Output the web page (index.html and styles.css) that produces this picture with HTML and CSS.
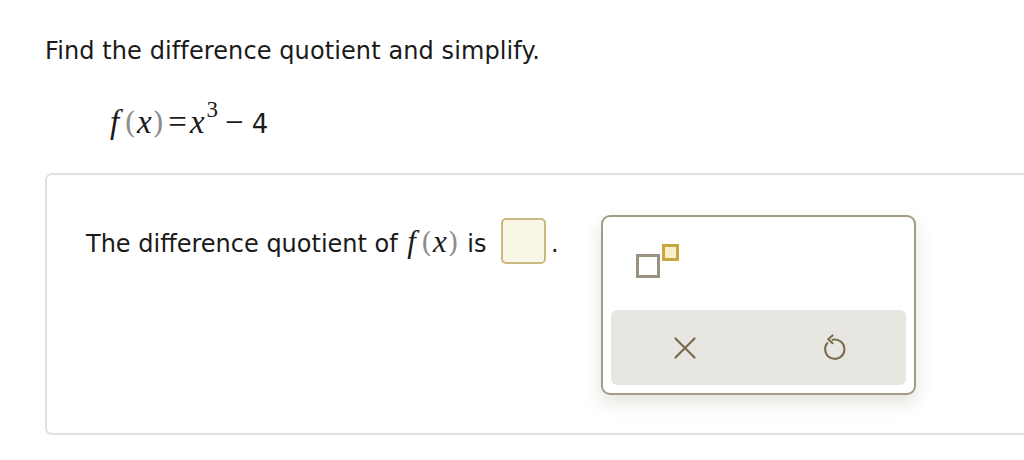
FILE: index.html
```html
<!DOCTYPE html>
<html lang="en">
<head>
    <meta charset="UTF-8">
    <title>Difference Quotient</title>
    <link rel="stylesheet" href="styles.css">
</head>
<body>
    <p class="prompt">Find the difference quotient and simplify.</p>
    <div class="formula">
        <span class="var f">f</span><span class="paren">(</span><span class="var">x</span><span class="paren">)</span><span class="op">=</span><span class="var">x</span><sup>3</sup><span class="op minus">&minus;</span><span class="num">4</span>
    </div>

    <div class="card">
        <div class="sentence-col">
            <p class="sentence">The difference quotient of <span class="var f">f</span><span class="paren">(</span><span class="var">x</span><span class="paren">)</span> is <span class="answer-box"></span><span class="dot">.</span></p>
        </div>

        <div class="keypad">
            <div class="keypad-top">
                <button class="sup-button" title="Superscript">
                    <span class="sq-base"></span><span class="sq-exp"></span>
                </button>
            </div>
            <div class="keypad-actions">
                <button class="icon-button" title="Clear">
                    <svg width="22" height="22" viewBox="0 0 22 22" fill="none" stroke="#7a6b4a" stroke-width="2.2" stroke-linecap="round">
                        <path d="M1.5 1.5 L20.5 20.5 M20.5 1.5 L1.5 20.5"/>
                    </svg>
                </button>
                <button class="icon-button" title="Undo">
                    <svg width="25" height="29" viewBox="0 0 26 30" fill="none" stroke="#7a6b4a" stroke-width="2.2" stroke-linecap="round" stroke-linejoin="round">
                        <path d="M6.5 10.5 A10 10 0 1 0 12 7"/>
                        <path d="M12 2.5 L7.5 6.5 L12 10.5"/>
                    </svg>
                </button>
            </div>
        </div>
    </div>
</body>
</html>
```

FILE: styles.css
```css
body {
    margin: 0;
    padding: 0;
    background: #fff;
    color: #1a1a1a;
    font-family: "DejaVu Sans", "Open Sans", sans-serif;
}

.prompt {
    margin: 0;
    padding: 36px 0 0 45px;
    font-size: 24px;
    line-height: 30px;
    letter-spacing: 0.1px;
}

.formula {
    padding: 36px 0 0 110px;
    height: 40px;
    font-family: "Liberation Serif", serif;
    font-size: 33px;
    line-height: 40px;
    white-space: nowrap;
}

.var {
    font-family: "Liberation Serif", serif;
    font-style: italic;
}

.var.f {
    padding-right: 4px;
}

.paren {
    font-family: "DejaVu Serif", serif;
    font-size: 30px;
    color: #8d8d8d;
    padding: 0 1px;
}

.formula .op {
    padding: 0 3px;
}

.formula .minus {
    padding: 0 8px 0 7px;
}

.formula sup {
    font-size: 23px;
    vertical-align: 16px;
    line-height: 0;
    margin-left: 2px;
}

.formula .num {
    font-family: "DejaVu Sans", sans-serif;
    font-size: 26px;
}

.card {
    margin: 31px 0 0 45px;
    height: 258px;
    border: 2px solid #e2e1dd;
    border-right: none;
    border-radius: 7px 0 0 7px;
    box-shadow: 0 1px 1px rgba(0, 0, 0, 0.06);
    display: flex;
    align-items: flex-start;
}

.sentence-col {
    flex: 0 0 554px;
}

.sentence {
    margin: 43px 0 0 39px;
    font-size: 24px;
    line-height: 48px;
    white-space: nowrap;
}

.sentence .var {
    font-size: 31px;
}

.sentence .paren {
    font-size: 28px;
}

.sentence .var.f {
    padding: 0 4px 0 2px;
}

.answer-box {
    display: inline-block;
    vertical-align: -12px;
    width: 45px;
    height: 46px;
    margin-left: 7px;
    box-sizing: border-box;
    border: 2px solid #cbb982;
    border-radius: 5px;
    background: #f9f5e7;
}

.dot {
    margin-left: 5px;
}

.keypad {
    margin-top: 40px;
    width: 315px;
    height: 180px;
    border: 2px solid #a39b88;
    border-radius: 9px;
    background: #fff;
    box-shadow: 0 8px 18px rgba(90, 80, 50, 0.16);
    padding: 0 8px 8px 8px;
    box-sizing: border-box;
    display: flex;
    flex-direction: column;
}

.keypad-top {
    flex: 1;
    padding: 27px 0 0 25px;
}

button {
    border: none;
    background: none;
    padding: 0;
    cursor: pointer;
}

.sup-button {
    display: flex;
    align-items: flex-start;
}

.sq-base {
    display: block;
    width: 24px;
    height: 24px;
    margin-top: 10px;
    border: 3px solid #9b9381;
    box-sizing: border-box;
    background: #fff;
}

.sq-exp {
    display: block;
    width: 17px;
    height: 17px;
    margin-left: 2px;
    border: 3px solid #c9a740;
    box-sizing: border-box;
    background: #f8efcc;
}

.keypad-actions {
    height: 75px;
    border-radius: 6px;
    background: #e8e6e1;
    display: flex;
    align-items: center;
    gap: 108px;
    padding-left: 54px;
}

.icon-button {
    display: flex;
    align-items: center;
    justify-content: center;
    width: 40px;
    height: 40px;
}
```
